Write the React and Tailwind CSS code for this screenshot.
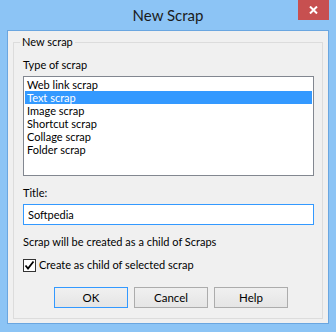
import React, { useState } from "react";

const items = [
  "Web link scrap",
  "Text scrap",
  "Image scrap",
  "Shortcut scrap",
  "Collage scrap",
  "Folder scrap",
];

function Button({ children, primary }) {
  return (
    <button
      type="button"
      className={`w-[74px] h-[21px] flex items-center justify-center border bg-gradient-to-b from-[#f0f0f0] to-[#e5e5e5] text-[11.5px] leading-none text-black ${
        primary ? "border-[#3399ff]" : "border-[#acacac]"
      }`}
    >
      {children}
    </button>
  );
}

export default function App() {
  const [selected, setSelected] = useState(1);
  const [title, setTitle] = useState("Softpedia");
  const [asChild, setAsChild] = useState(true);

  return (
    <div
      className="w-[336px] h-[332px] flex flex-col bg-[#8cc4f5] overflow-hidden"
      style={{ fontFamily: 'Lato, "Noto Sans", sans-serif' }}
    >
      {/* Title bar */}
      <div className="relative h-[30px] flex items-center justify-center">
        <span className="text-[15px] text-[#1b1b1b] leading-none pt-[1px]">New Scrap</span>
        <div className="absolute top-0 right-[7px] w-[31px] h-[20px] bg-[#c75050] flex items-center justify-center">
          <svg width="9" height="8" viewBox="0 0 9 8">
            <path d="M1 0.5 L8 7.5 M8 0.5 L1 7.5" stroke="#fff" strokeWidth="2" />
          </svg>
        </div>
      </div>

      {/* Client area */}
      <div className="mx-[7px] h-[294px] border border-[#6aa6e0] bg-[#f0f0f0] pt-[11px] px-[5px] pb-[4px] flex">
        <div className="relative flex-1 border border-[#dcdcdc] flex flex-col pl-[9px] pr-[8px] text-[11px] text-black">
          <span className="absolute -top-[9px] left-[6px] px-[2px] bg-[#f0f0f0] leading-[16px]">New scrap</span>

          <div className="mt-[14px] leading-[16px]">Type of scrap</div>
          <div className="mt-[3px] h-[100px] border border-[#828790] bg-white p-[1px] flex flex-col">
            {items.map((it, i) => (
              <div
                key={it}
                onClick={() => setSelected(i)}
                className={`h-[13px] leading-[13px] px-[2px] ${
                  selected === i ? "bg-[#3399ff] text-white" : "text-black"
                }`}
              >
                {it}
              </div>
            ))}
          </div>

          <div className="mt-[9px] leading-[16px]">Title:</div>
          <input
            value={title}
            onChange={(e) => setTitle(e.target.value)}
            className="mt-[3px] h-[21px] border border-[#3399ff] bg-white px-[4px] text-[11px] text-black outline-none"
          />

          <div className="mt-[9px] leading-[16px]">Scrap will be created as a child of Scraps</div>

          <label className="mt-[7px] h-[16px] flex items-center gap-[3px]">
            <span
              onClick={() => setAsChild(!asChild)}
              className="w-[13px] h-[13px] border border-[#333] bg-white flex items-center justify-center"
            >
              {asChild && (
                <svg width="11" height="11" viewBox="0 0 11 11">
                  <path d="M1.5 5.5 L4 8.5 L9.5 1.5" stroke="#000" strokeWidth="1.8" fill="none" />
                </svg>
              )}
            </span>
            <span className="leading-[16px]">Create as child of selected scrap</span>
          </label>

          <div className="mt-[14px] ml-[31px] flex gap-[6px]">
            <Button primary>OK</Button>
            <Button>Cancel</Button>
            <Button>Help</Button>
          </div>
        </div>
      </div>
    </div>
  );
}
